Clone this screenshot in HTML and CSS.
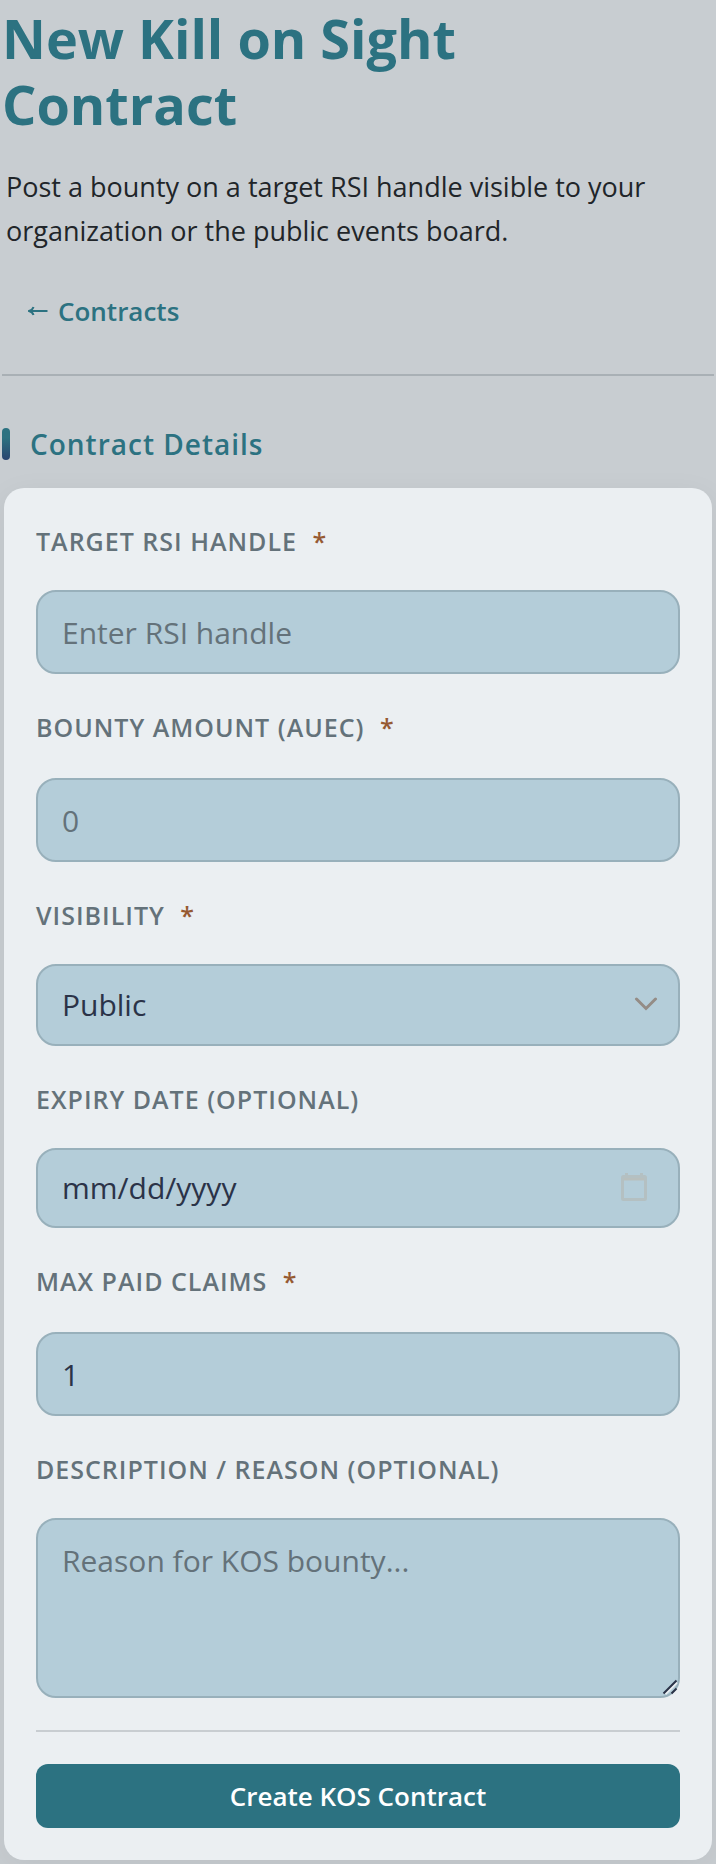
FILE: index.html
```html
<!DOCTYPE html>
<html lang="en">
<head>
<meta charset="utf-8">
<meta name="viewport" content="width=device-width, initial-scale=1">
<title>New Kill on Sight Contract</title>
<link rel="stylesheet" href="styles.css">
</head>
<body>
<main class="page">
  <header class="page-header">
    <h1 class="title">New Kill on Sight Contract</h1>
    <p class="lead">Post a bounty on a target RSI handle visible to your organization or the public events board.</p>
    <a class="back" href="#contracts"><svg class="back-arrow" viewBox="0 0 20 10" aria-hidden="true"><path d="M19.500 5H2M5.500 1Q4.500 4 1 5Q4.500 6 5.500 9"/></svg>Contracts</a>
  </header>
  <h2 class="section-title">Contract Details</h2>
  <form class="card">
    <div class="field">
      <label class="label" for="handle">Target RSI Handle <span class="required">*</span></label>
      <input class="control" id="handle" type="text" placeholder="Enter RSI handle">
    </div>
    <div class="field field-number">
      <label class="label" for="bounty">Bounty Amount (aUEC) <span class="required">*</span></label>
      <input class="control" id="bounty" type="number" placeholder="0">
    </div>
    <div class="field">
      <label class="label" for="visibility">Visibility <span class="required">*</span></label>
      <div class="wrap">
        <select class="control control-select" id="visibility"><option>Public</option><option>Organization</option></select>
        <svg class="chevron" viewBox="0 0 24 14" aria-hidden="true"><path d="M2.500 2L12 11.500L21.500 2"/></svg>
      </div>
    </div>
    <div class="field">
      <label class="label" for="expiry">Expiry Date (optional)</label>
      <div class="wrap">
        <input class="control control-date" id="expiry" type="date">
        <svg class="calendar" viewBox="0 0 26 28" aria-hidden="true"><path class="calendar-band" d="M2.500 3.500h21v4h-21z"/><path d="M2.500 3.500h21q1 0 1 1v21q0 1-1 1h-21q-1 0-1-1v-21q0-1 1-1zM5.500 0v4M20.500 0v4"/></svg>
      </div>
    </div>
    <div class="field field-number">
      <label class="label" for="claims">Max Paid Claims <span class="required">*</span></label>
      <input class="control" id="claims" type="number" value="1">
    </div>
    <div class="field">
      <label class="label" for="reason">Description / Reason (optional)</label>
      <div class="wrap">
        <textarea class="control control-area" id="reason" placeholder="Reason for KOS bounty..."></textarea>
        <svg class="grip" viewBox="0 0 16 16" aria-hidden="true"><path class="grip-light" d="M3.500 15L15 3.500M11 15.500L15.500 11"/><path d="M1.500 14.500L14.500 1.500M9.500 14.500L14.500 9.500"/></svg>
      </div>
    </div>
    <div class="actions">
      <button class="submit" type="submit">Create KOS Contract</button>
    </div>
  </form>
</main>
</body>
</html>
```
FILE: styles.css
```css
* {
  box-sizing: border-box;
}

body {
  margin: 0;
  background: #c8cdd1;
  color: #212529;
  font-family: "Open Sans", "Noto Sans", sans-serif;
}

.page {
  padding: 5px 2px 4px;
}

.page-header {
  padding-bottom: 31px;
  border-bottom: 2px solid #a9b0b5;
}

.title {
  margin: 0;
  max-width: 600px;
  color: #2c7281;
  font-size: 54px;
  font-weight: 700;
  line-height: 66px;
}

.lead {
  margin: 28px 4px 0;
  font-size: 27px;
  line-height: 44px;
}

.back {
  display: inline-flex;
  align-items: center;
  gap: 10px;
  margin-top: 26px;
  padding: 0 26px;
  color: #2c7281;
  font-size: 26px;
  font-weight: 600;
  line-height: 64px;
  text-decoration: none;
}

.back-arrow {
  width: 20px;
  height: 10px;
  fill: none;
  stroke: currentColor;
  stroke-width: 2;
}

.section-title {
  display: flex;
  align-items: center;
  gap: 20px;
  margin: 48px 0 24px;
  color: #2c7281;
  font-size: 28px;
  font-weight: 600;
  line-height: 40px;
  letter-spacing: 1px;
}

.section-title::before {
  content: "";
  width: 8px;
  height: 32px;
  border-radius: 4px;
  background: linear-gradient(#2c7281 30%, #2a4570);
}

.card {
  display: flex;
  flex-direction: column;
  gap: 32px;
  margin: 0 2px;
  padding: 32px;
  border-radius: 20px;
  background: #ebeff2;
  box-shadow: 0 8px 32px rgba(0, 0, 0, 0.06);
}

.field {
  display: flex;
  flex-direction: column;
  gap: 28px;
}

.field-number {
  gap: 30px;
}

.label {
  color: #64727a;
  font-size: 25px;
  font-weight: 600;
  line-height: 42px;
  letter-spacing: 1px;
  text-transform: uppercase;
}

.required {
  margin-left: 8px;
  color: #965a32;
}

.wrap {
  position: relative;
  display: flex;
}

.control {
  width: 100%;
  height: 84px;
  margin: 0;
  padding: 0 24px;
  border: 2px solid #98b0bb;
  border-radius: 20px;
  background: #b4cdd9;
  color: #2b3348;
  font-family: inherit;
  font-size: 30px;
  line-height: 46px;
  outline: none;
}

.control::placeholder {
  color: #64727a;
  opacity: 1;
}

.control-select {
  height: 82px;
  appearance: none;
}

.control-date {
  height: 80px;
}

.control-date::-webkit-calendar-picker-indicator {
  opacity: 0;
}

.control-date::-webkit-datetime-edit-fields-wrapper,
.control-date::-webkit-datetime-edit-month-field,
.control-date::-webkit-datetime-edit-day-field,
.control-date::-webkit-datetime-edit-year-field,
.control-date::-webkit-datetime-edit-text {
  padding: 0;
}

.control-area {
  height: 180px;
  padding: 18px 24px;
  resize: none;
}

.chevron,
.calendar,
.grip {
  position: absolute;
  fill: none;
  pointer-events: none;
}

.chevron {
  top: 33px;
  right: 22px;
  width: 24px;
  height: 14px;
  stroke: #948c86;
  stroke-width: 3;
  stroke-linecap: round;
}

.calendar {
  top: 25px;
  right: 33px;
  width: 26px;
  height: 28px;
  stroke: #b4c0c2;
  stroke-width: 3;
}

.calendar-band {
  stroke: none;
  fill: #b8bfbd;
}

.grip {
  right: 2px;
  bottom: 3px;
  width: 16px;
  height: 16px;
  stroke: #2b3348;
  stroke-width: 2;
}

.grip-light {
  stroke: #ebeff2;
}

.actions {
  padding-top: 32px;
  border-top: 2px solid #c8cdd1;
}

.submit {
  display: block;
  width: 100%;
  height: 64px;
  border: 0;
  border-radius: 12px;
  background: #2c7281;
  color: #fff;
  font-family: inherit;
  font-size: 26px;
  font-weight: 600;
}
```
